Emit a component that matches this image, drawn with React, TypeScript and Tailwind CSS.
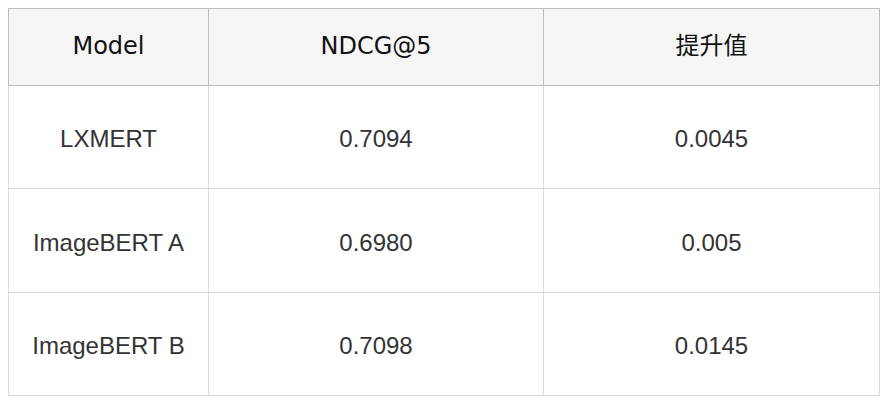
import React from "react";

const rows = [
  ["LXMERT", "0.7094", "0.0045"],
  ["ImageBERT A", "0.6980", "0.005"],
  ["ImageBERT B", "0.7098", "0.0145"],
];
const heights = ["h-[103px]", "h-[104px]", "h-[103px]"];

export default function App() {
  return (
    <div className="w-[886px] h-[404px] bg-white pl-[8px] pt-[8px]">
      <div className="grid grid-cols-[201px_335px_336px] w-[872px]">
        {["Model", "NDCG@5", "提升值"].map((h, i) => (
          <div
            key={h}
            className={`h-[78px] flex items-center justify-center bg-[#f5f5f5] border-t border-b border-r border-[#bdbdbd] text-[24px] text-[#111] ${i === 0 ? "border-l" : ""}`}
            style={{ fontFamily: '"DejaVu Sans", "Noto Sans CJK SC", sans-serif' }}
          >
            <span className="pb-[2px]">{h}</span>
          </div>
        ))}
        {rows.map((r, ri) =>
          r.map((c, ci) => (
            <div
              key={ri + "-" + ci}
              className={`${heights[ri]} flex items-center justify-center border-b border-r border-[#dddddd] text-[24px] text-[#333] ${ci === 0 ? "border-l" : ""}`}
              style={{ fontFamily: '"Liberation Sans", Arial, sans-serif' }}
            >
              <span className="pt-[4px]">{c}</span>
            </div>
          ))
        )}
      </div>
    </div>
  );
}
